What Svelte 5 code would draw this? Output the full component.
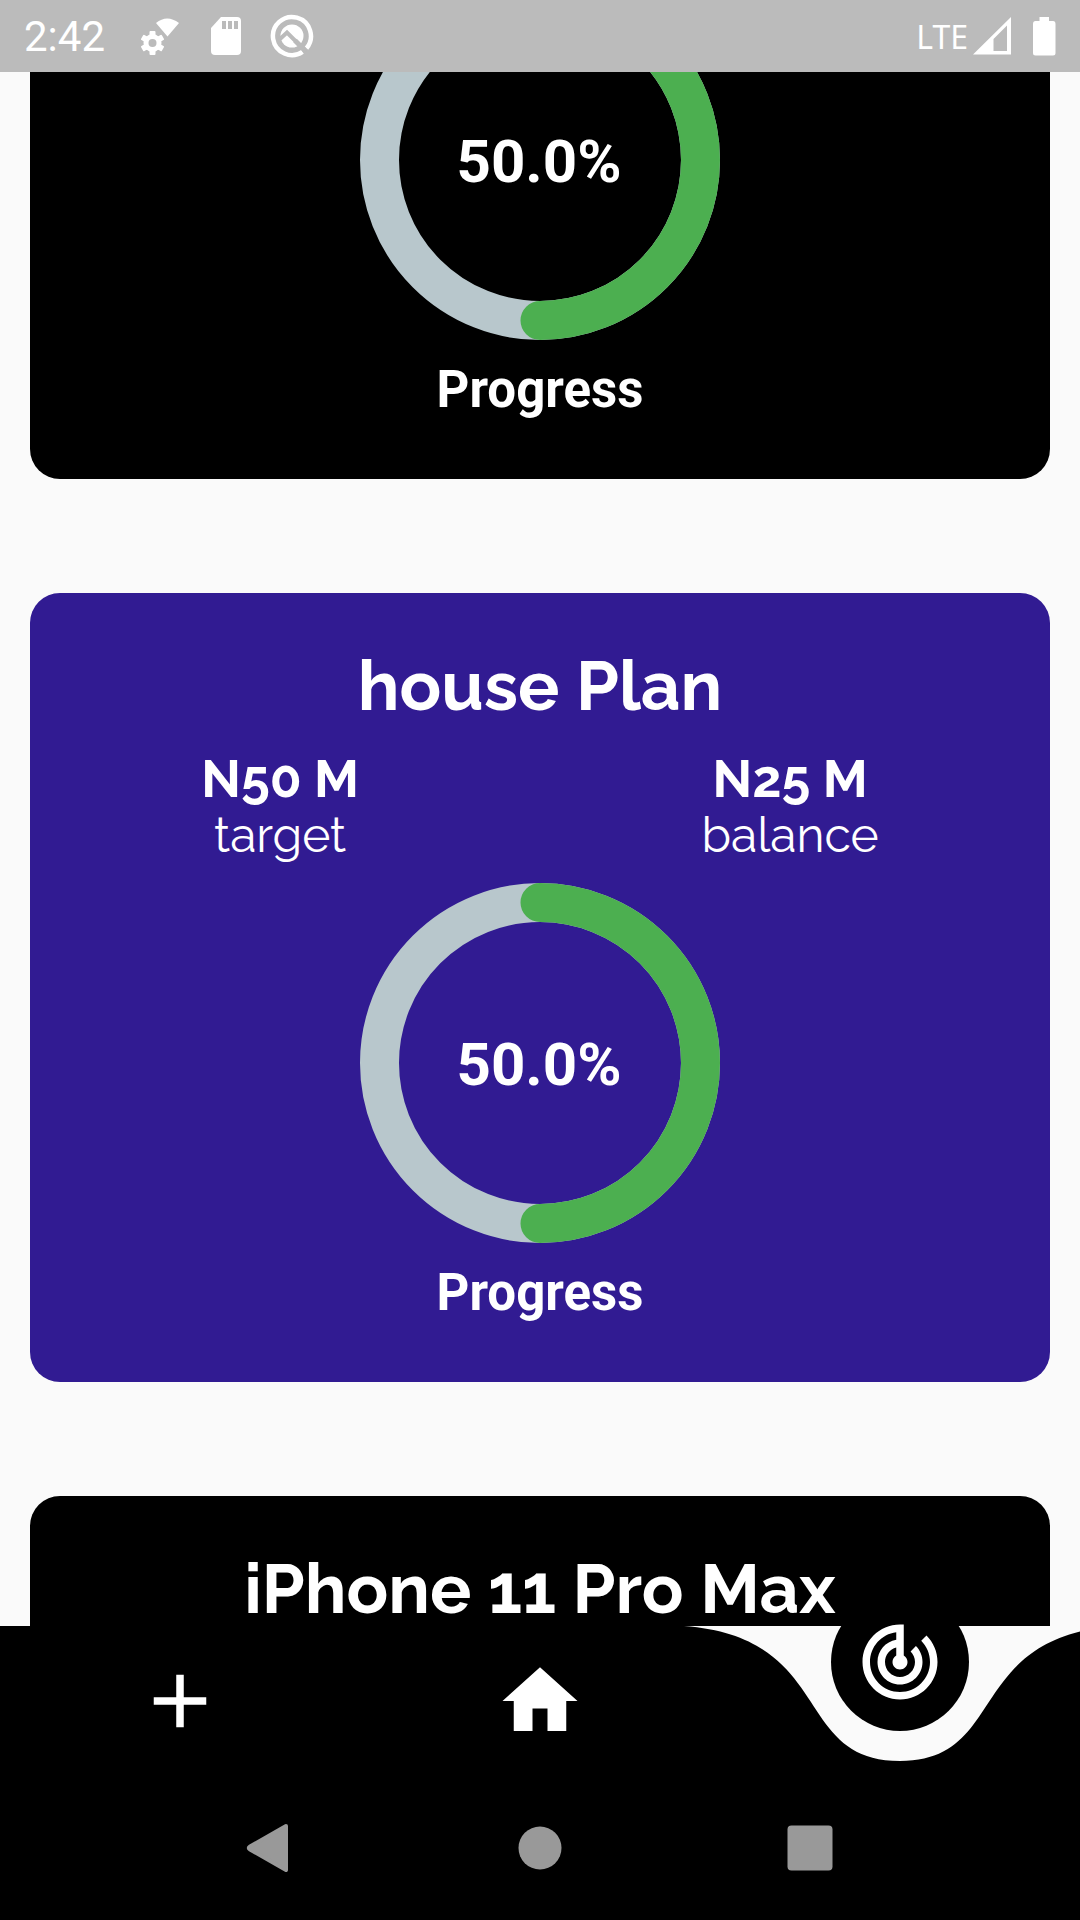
<script>
  const plans = [
    { progress: 50, tone: 'black', clipped: true },
    { title: 'house Plan', target: 'N50 M', balance: 'N25 M', progress: 50, tone: 'indigo' },
    { title: 'iPhone 11 Pro Max', tone: 'black' }
  ];
</script>

<div class="screen">
  <header class="status">
    <span class="time">2:42</span>
    <div class="notices">
      <svg viewBox="0 0 48 48" aria-hidden="true">
        <path d="M20 11Q31 2 43 11L31.500 24.500Z" fill="#fff" />
        <g fill="#fff">
          <circle cx="16.500" cy="31" r="9" />
          {#each [0, 60, 120] as angle}
            <rect x="13.500" y="19" width="6" height="24" rx="1" transform="rotate({angle} 16.500 31)" />
          {/each}
        </g>
        <circle cx="16.500" cy="31" r="4" fill="#bbb" />
      </svg>
      <svg viewBox="0 0 48 48" aria-hidden="true">
        <path d="M19 5H35Q39 5 39 9V39Q39 43 35 43H13Q9 43 9 39V16Z" fill="#fff" />
        <path d="M20 9h4v8h-4zM26 9h4v8h-4zM32 9h4v8h-4z" fill="#bbb" />
      </svg>
      <svg viewBox="0 0 48 48" aria-hidden="true">
        <path d="M34.500 39.800A19 19 0 1 1 38.500 36.200" fill="none" stroke="#fff" stroke-width="4.500" />
        <circle cx="24" cy="24" r="11.500" fill="#fff" />
        <path d="M12 27L19 20.500L38 39.500" fill="none" stroke="#bbb" stroke-width="4" />
        <path d="M27 28.500L36.500 38" stroke="#bbb" stroke-width="5" />
      </svg>
    </div>
    <div class="signals">
      <span class="network">LTE</span>
      <svg class="cell" viewBox="0 0 40 40" aria-hidden="true">
        <path fill="#fff" fill-rule="evenodd" d="M1 38.500L39 1V38.500ZM21.500 23V35H35V9.500Z" />
      </svg>
      <svg class="battery" viewBox="0 0 24 40" aria-hidden="true">
        <path fill="#fff" d="M7.500 1H17V5H21Q23.500 5 23.500 8V37Q23.500 39.500 21 39.500H3.500Q1 39.500 1 37V8Q1 5 3.500 5H7.500Z" />
      </svg>
    </div>
  </header>

  <main>
    {#each plans as plan}
      <article class="card {plan.tone}" class:clipped={plan.clipped}>
        {#if plan.title}<h2>{plan.title}</h2>{/if}
        {#if plan.target}
          <dl>
            <div><dt>target</dt><dd>{plan.target}</dd></div>
            <div><dt>balance</dt><dd>{plan.balance}</dd></div>
          </dl>
        {/if}
        {#if plan.progress}
          <div class="ring">
            <svg viewBox="0 0 360 360" aria-hidden="true">
              <circle cx="180" cy="180" r="160.500" fill="none" stroke="#b8c7cc" stroke-width="39" />
              <circle
                cx="180"
                cy="180"
                r="160.500"
                fill="none"
                stroke="#4caf50"
                stroke-width="39"
                stroke-linecap="round"
                pathLength="100"
                stroke-dasharray="{plan.progress} 100"
                transform="rotate(-90 180 180)"
              />
            </svg>
            <strong>{plan.progress.toFixed(1)}%</strong>
          </div>
          <p>Progress</p>
        {/if}
      </article>
    {/each}
  </main>

  <nav class="tabs" aria-label="Main">
    <svg class="curve" viewBox="0 0 1080 150" preserveAspectRatio="none" aria-hidden="true">
      <path d="M0 0H684C835.200 11.250 792 135 900 135C1008 135 964.800 11.250 1116 0V150H0Z" />
    </svg>
    <button aria-label="Add plan">
      <svg viewBox="0 0 24 24"><path d="M19 13h-6v6h-2v-6H5v-2h6V5h2v6h6v2z" /></svg>
    </button>
    <button aria-label="Home">
      <svg viewBox="0 0 24 24"><path d="M10 20v-6h4v6h5v-8h3L12 3 2 12h3v8z" /></svg>
    </button>
    <button class="active" aria-label="Track plans" aria-current="page">
      <svg viewBox="0 0 24 24">
        <path d="M19.070 4.930l-1.410 1.410C19.100 7.790 20 9.790 20 12c0 4.420-3.580 8-8 8s-8-3.580-8-8c0-4.080 3.050-7.440 7-7.930v2.020C8.160 6.570 6 9.030 6 12c0 3.310 2.690 6 6 6s6-2.690 6-6c0-1.660-.67-3.160-1.760-4.240l-1.410 1.410C15.550 9.900 16 10.900 16 12c0 2.210-1.790 4-4 4s-4-1.790-4-4c0-1.860 1.280-3.410 3-3.860v2.140c-.6.350-1 .980-1 1.720 0 1.100.9 2 2 2s2-.9 2-2c0-.74-.4-1.380-1-1.720V2h-1C6.480 2 2 6.480 2 12s4.480 10 10 10 10-4.480 10-10c0-2.760-1.120-5.260-2.930-7.070z" />
      </svg>
    </button>
  </nav>

  <nav class="system" aria-label="System">
    <button aria-label="Back">
      <svg viewBox="0 0 48 48"><path d="M40 2L4 22.500Q1.500 24 4 25.500L40 46Z" stroke="#999" stroke-width="4" stroke-linejoin="round" /></svg>
    </button>
    <button aria-label="Home screen">
      <svg viewBox="0 0 48 48"><circle cx="24" cy="24" r="21.500" /></svg>
    </button>
    <button aria-label="Recent apps">
      <svg viewBox="0 0 48 48"><rect x="1.500" y="1.500" width="45" height="45" rx="4" /></svg>
    </button>
  </nav>
</div>

<style>
  :global(body) {
    margin: 0;
  }
  .screen {
    height: 100vh;
    display: flex;
    flex-direction: column;
    overflow: hidden;
    background: #fafafa;
    color: #fff;
    font-family: Roboto, sans-serif;
  }
  svg {
    display: block;
  }
  .status {
    flex: none;
    height: 72px;
    box-sizing: border-box;
    padding: 0 24px;
    display: flex;
    align-items: center;
    background: #bbb;
  }
  .time {
    width: 112px;
    font-size: 42px;
  }
  .notices {
    display: flex;
    gap: 18px;
  }
  .notices svg {
    width: 48px;
    height: 48px;
  }
  .signals {
    margin-left: auto;
    display: flex;
    align-items: center;
  }
  .network {
    font-family: "Noto Sans", sans-serif;
    font-size: 32px;
    margin-right: 4px;
  }
  .cell {
    width: 40px;
    height: 40px;
    margin-right: 20px;
  }
  .battery {
    width: 24px;
    height: 40px;
  }
  main {
    flex: 1;
    min-height: 0;
    overflow: hidden;
    padding: 0 30px;
    display: flex;
    flex-direction: column;
    gap: 114px;
  }
  .card {
    flex: none;
    box-sizing: border-box;
    min-height: 789px;
    padding: 56px 0 59px;
    border-radius: 30px;
    display: flex;
    flex-direction: column;
    align-items: center;
  }
  .card.clipped {
    min-height: 0;
    padding-top: 0;
    border-radius: 0 0 30px 30px;
  }
  .clipped .ring {
    margin-top: -92px;
  }
  .black {
    background: #000;
  }
  .indigo {
    background: #311b92;
  }
  h2 {
    margin: 0;
    font: 700 69px/74px Raleway, Lato, sans-serif;
  }
  dl {
    align-self: stretch;
    margin: 28px 0 20px;
    display: flex;
    justify-content: space-around;
    text-align: center;
    font-family: Raleway, Lato, sans-serif;
  }
  dl div {
    display: flex;
    flex-direction: column-reverse;
  }
  dt {
    font-size: 48px;
    line-height: 56px;
    font-weight: 400;
  }
  dd {
    margin: 0;
    font-size: 52px;
    line-height: 56px;
    font-weight: 700;
  }
  .ring {
    width: 360px;
    display: grid;
    place-items: center;
  }
  .ring > * {
    grid-area: 1 / 1;
  }
  .ring svg {
    width: 100%;
  }
  strong {
    padding: 2px 2px 0 0;
    font-size: 60px;
    font-weight: 700;
  }
  p {
    margin: 20px 0 0;
    font-size: 51px;
    line-height: 60px;
    font-weight: 700;
  }
  button {
    border: 0;
    padding: 0;
    background: none;
    display: grid;
    place-items: center;
  }
  .tabs {
    flex: none;
    height: 150px;
    position: relative;
    display: grid;
    grid-template-columns: repeat(3, 1fr);
    align-items: center;
    justify-items: center;
  }
  .curve {
    position: absolute;
    inset: 0;
    width: 100%;
    height: 100%;
  }
  .tabs button {
    position: relative;
    width: 138px;
    height: 138px;
    border-radius: 50%;
  }
  .tabs button svg {
    width: 90px;
    height: 90px;
    fill: #fff;
  }
  .tabs .active {
    bottom: 39px;
    background: #000;
  }
  .system {
    flex: none;
    height: 144px;
    padding: 0 12.5%;
    display: grid;
    grid-template-columns: repeat(3, 1fr);
    background: #000;
  }
  .system svg {
    width: 48px;
    height: 48px;
    fill: #999;
  }
</style>
